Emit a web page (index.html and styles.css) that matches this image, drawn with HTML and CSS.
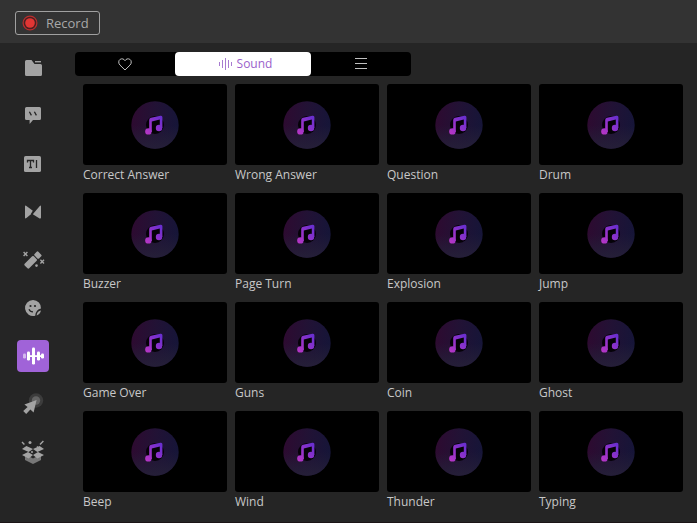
FILE: index.html
```html
<!DOCTYPE html>
<html lang="en">

<head>
    <meta charset="UTF-8">
    <meta name="viewport" content="width=device-width, initial-scale=1.0">
    <title>Sound library</title>
    <link rel="stylesheet" href="styles.css">
</head>

<body>
    <!-- Shared artwork for the sound cards -->
    <svg class="defs" width="0" height="0" aria-hidden="true">
        <defs>
            <linearGradient id="disc-fill" x1="0" y1="0.2" x2="1" y2="0.3">
                <stop offset="0" stop-color="#2e0a30" />
                <stop offset="0.5" stop-color="#221235" />
                <stop offset="1" stop-color="#161538" />
            </linearGradient>
            <linearGradient id="disc-shade" x1="0" y1="0" x2="0" y2="1">
                <stop offset="0.5" stop-color="#251f38" stop-opacity="0" />
                <stop offset="1" stop-color="#251f38" />
            </linearGradient>
            <linearGradient id="note-fill" gradientUnits="userSpaceOnUse" x1="14" y1="32" x2="31" y2="18">
                <stop offset="0" stop-color="#b836c4" />
                <stop offset="1" stop-color="#6a2fd0" />
            </linearGradient>
        </defs>
        <symbol id="disc" viewBox="0 0 48 48">
            <circle cx="24" cy="24" r="23.7" fill="url(#disc-fill)" />
            <circle cx="24" cy="24" r="23.7" fill="url(#disc-shade)" />
            <circle cx="24" cy="24" r="9" fill="#050208" />
            <g fill="url(#note-fill)">
                <circle cx="17.4" cy="30.4" r="3.2" />
                <circle cx="28" cy="27" r="3.2" />
                <path d="M18.2 31V19Q18.2 17.2 20 16.8L29.4 14.8Q31.4 14.4 31.4 16.3V27H28.8V18.4L20.8 20.4V31Z" />
            </g>
        </symbol>
    </svg>

    <!-- Top bar -->
    <header class="topbar">
        <button class="record" type="button">
            <svg width="16" height="16" viewBox="0 0 16 16" aria-hidden="true">
                <circle cx="8" cy="8" r="6.9" fill="#4a2021" stroke="#b92f2f" stroke-width="1.2" />
                <circle cx="8" cy="8" r="4.8" fill="#e23634" />
            </svg>
            <span>Record</span>
        </button>
    </header>

    <div class="workspace">
        <!-- Tool categories -->
        <nav class="sidebar" aria-label="Tools">
            <button class="tool" type="button" aria-label="Media">
                <svg width="24" height="24" viewBox="0 0 24 24">
                    <path d="M4 5.5Q4 4 5.5 4H10.5L13.5 8H19.5Q21 8 21 9.5V18.5Q21 20 19.5 20H5.5Q4 20 4 18.5Z" />
                    <rect x="14" y="5" width="6" height="1.4" />
                </svg>
            </button>
            <button class="tool" type="button" aria-label="Annotations">
                <svg width="24" height="24" viewBox="0 0 24 24">
                    <path d="M5.5 3H18.5Q20 3 20 4.5V14.5Q20 16 18.5 16H12L8.6 20V16H5.5Q4 16 4 14.5V4.5Q4 3 5.5 3Z" />
                    <path class="cut-line" d="M8.4 7.8L10.4 11.4M13.4 7.8L15.4 11.4" />
                </svg>
            </button>
            <button class="tool" type="button" aria-label="Text">
                <svg width="24" height="24" viewBox="0 0 24 24">
                    <rect x="3" y="4" width="17" height="16" rx="1.6" />
                    <path class="cut-line" d="M6.5 10.5V8.5H12.5V10.5M9.5 8.5V15.5M8 15.5H11M15.5 8V16" />
                </svg>
            </button>
            <button class="tool" type="button" aria-label="Transitions">
                <svg width="24" height="24" viewBox="0 0 24 24">
                    <path d="M4 6.5Q4 5 5.4 5.9L12.2 11L10.6 13.8L5.4 18.1Q4 19 4 17.5Z" />
                    <path d="M20 6.5Q20 5 18.8 5.9L11.8 14.2L18.6 18.4Q20 19 20 17.5Z" />
                    <path class="cut-line" d="M13.4 9.4L10.4 14.4" />
                </svg>
            </button>
            <button class="tool" type="button" aria-label="Effects">
                <svg width="24" height="24" viewBox="0 0 24 24">
                    <g transform="rotate(45 12 12)">
                        <rect x="8.8" y="8.8" width="6.4" height="13" rx="1.2" />
                        <rect x="8.8" y="2.4" width="6.4" height="5.4" rx="1.2" />
                    </g>
                    <path class="line" d="M2.6 4L6.4 8M6.4 4L2.6 8M19.4 11.8L23 15.4M23 11.8L19.4 15.4" />
                    <circle cx="15.5" cy="17.6" r="1.3" />
                </svg>
            </button>
            <button class="tool" type="button" aria-label="Stickers">
                <svg width="24" height="24" viewBox="0 0 24 24">
                    <path d="M12 4A8 8 0 0 1 20 12.6Q15 13.4 14.2 19.7A8 8 0 1 1 12 4Z" />
                    <path d="M20 14.4Q19 18.4 15.6 19.4Q16 15 20 14.4Z" />
                    <circle class="cut" cx="9.5" cy="10" r="1.1" />
                    <circle class="cut" cx="14" cy="10" r="1.1" />
                    <path class="cut-line" d="M8 13.2Q9 15.8 12 15.8" />
                </svg>
            </button>
            <button class="tool active" type="button" aria-label="Audio" aria-current="page">
                <svg width="24" height="24" viewBox="0 0 24 24">
                    <rect x="2" y="9.5" width="3" height="5" rx="1.2" opacity="0.55" />
                    <rect x="6" y="7.5" width="3" height="9" rx="1.2" />
                    <rect x="11" y="3.5" width="3" height="17" rx="1.2" />
                    <rect x="16" y="7.5" width="3" height="9" rx="1.2" />
                    <rect x="20" y="9.5" width="3" height="5" rx="1.2" />
                    <rect x="7" y="11.2" width="14" height="1.8" />
                </svg>
            </button>
            <button class="tool" type="button" aria-label="Cursor">
                <svg width="24" height="24" viewBox="0 0 24 24">
                    <circle cx="15" cy="8.5" r="7.2" fill="#3c3c3c" />
                    <circle cx="15" cy="8.5" r="4.2" fill="#646464" />
                    <path d="M15.6 8L3.4 12.4L6.6 15L2.2 19L5.2 22L9.4 17.6L12.6 20.6Z" />
                </svg>
            </button>
            <button class="tool" type="button" aria-label="Assets">
                <svg width="26" height="26" viewBox="0 0 26 26">
                    <path fill="#777" d="M5 15L13 19.4L21 15V21L13 25L5 21Z" />
                    <path d="M2 10L6.4 7L13 10L8.6 13ZM24 10L19.6 7L13 10L17.4 13Z" />
                    <path d="M2 16L8 13L13 16L8.6 19.6ZM24 16L18 13L13 16L17.4 19.6Z" />
                    <path class="line" d="M2 3L4.4 5.4M20 5.6L23.4 2M17 8.4L18 7.6" />
                    <circle cx="10" cy="3.6" r="1.5" />
                    <circle cx="12" cy="13" r="1" />
                </svg>
            </button>
        </nav>

        <main class="library">
            <!-- Library tabs -->
            <div class="tabs">
                <button class="tab" type="button" aria-label="Favorites">
                    <svg width="14" height="14" viewBox="0 0 14 14">
                        <path d="M7 13L1.9 8C0.2 6.2 0.4 3.4 2.2 2.3C3.9 1.3 6 1.9 7 3.7C8 1.9 10.1 1.3 11.8 2.3C13.6 3.4 13.8 6.2 12.1 8Z" />
                    </svg>
                </button>
                <button class="tab selected" type="button">
                    <svg width="14" height="14" viewBox="0 0 14 14" aria-hidden="true">
                        <path d="M1.5 5V9M4.5 3V11M7.5 1V13M10.5 3V11M13.5 5V9" />
                    </svg>
                    <span>Sound</span>
                </button>
                <button class="tab" type="button" aria-label="List">
                    <svg width="14" height="14" viewBox="0 0 14 14">
                        <path d="M1 1.5H13M1 6.5H13M1 11.5H13" />
                    </svg>
                </button>
            </div>

            <!-- Sound effects -->
            <ul class="sounds">
                <li class="sound">
                    <div class="thumb"><svg class="disc"><use href="#disc" /></svg></div>
                    <span class="name">Correct Answer</span>
                </li>
                <li class="sound">
                    <div class="thumb"><svg class="disc"><use href="#disc" /></svg></div>
                    <span class="name">Wrong Answer</span>
                </li>
                <li class="sound">
                    <div class="thumb"><svg class="disc"><use href="#disc" /></svg></div>
                    <span class="name">Question</span>
                </li>
                <li class="sound">
                    <div class="thumb"><svg class="disc"><use href="#disc" /></svg></div>
                    <span class="name">Drum</span>
                </li>
                <li class="sound">
                    <div class="thumb"><svg class="disc"><use href="#disc" /></svg></div>
                    <span class="name">Buzzer</span>
                </li>
                <li class="sound">
                    <div class="thumb"><svg class="disc"><use href="#disc" /></svg></div>
                    <span class="name">Page Turn</span>
                </li>
                <li class="sound">
                    <div class="thumb"><svg class="disc"><use href="#disc" /></svg></div>
                    <span class="name">Explosion</span>
                </li>
                <li class="sound">
                    <div class="thumb"><svg class="disc"><use href="#disc" /></svg></div>
                    <span class="name">Jump</span>
                </li>
                <li class="sound">
                    <div class="thumb"><svg class="disc"><use href="#disc" /></svg></div>
                    <span class="name">Game Over</span>
                </li>
                <li class="sound">
                    <div class="thumb"><svg class="disc"><use href="#disc" /></svg></div>
                    <span class="name">Guns</span>
                </li>
                <li class="sound">
                    <div class="thumb"><svg class="disc"><use href="#disc" /></svg></div>
                    <span class="name">Coin</span>
                </li>
                <li class="sound">
                    <div class="thumb"><svg class="disc"><use href="#disc" /></svg></div>
                    <span class="name">Ghost</span>
                </li>
                <li class="sound">
                    <div class="thumb"><svg class="disc"><use href="#disc" /></svg></div>
                    <span class="name">Beep</span>
                </li>
                <li class="sound">
                    <div class="thumb"><svg class="disc"><use href="#disc" /></svg></div>
                    <span class="name">Wind</span>
                </li>
                <li class="sound">
                    <div class="thumb"><svg class="disc"><use href="#disc" /></svg></div>
                    <span class="name">Thunder</span>
                </li>
                <li class="sound">
                    <div class="thumb"><svg class="disc"><use href="#disc" /></svg></div>
                    <span class="name">Typing</span>
                </li>
            </ul>
        </main>
    </div>
</body>

</html>
```

FILE: styles.css
```css
/* Set the style of the entire page */
* {
    box-sizing: border-box;
}

body {
    margin: 0;
    min-height: 100vh;
    background-color: #252525;
    border-bottom: 1px solid #1b1416;
    color: #c8c8c8;
    font-family: "Open Sans", "Noto Sans", sans-serif;
    font-size: 12px;
    line-height: 16px;
}

button {
    padding: 0;
    border: 0;
    background: none;
    color: inherit;
    font: inherit;
    cursor: pointer;
}

.defs {
    position: absolute;
}

/* Top bar */
.topbar {
    display: flex;
    align-items: flex-start;
    height: 43px;
    padding: 11px 15px 0;
    background-color: #333333;
}

.record {
    display: flex;
    align-items: center;
    gap: 8px;
    height: 24px;
    padding: 0 10px 0 6px;
    border: 1px solid #a0a0a0;
    border-radius: 3px;
    color: #a8a8a8;
    font-size: 13px;
}

/* Sidebar on the left, library on the right */
.workspace {
    display: flex;
}

.sidebar {
    display: flex;
    flex-direction: column;
    gap: 16px;
    padding: 9px 26px 0 17px;
}

.tool {
    display: flex;
    align-items: center;
    justify-content: center;
    width: 32px;
    height: 32px;
    border-radius: 4px;
    fill: #a3a3a3;
}

.tool.active {
    background-color: #a063d8;
    fill: #ffffff;
}

.line {
    fill: none;
    stroke: #a3a3a3;
    stroke-width: 1.4;
}

/* Details cut out of an icon */
.cut {
    fill: #252525;
}

.cut-line {
    fill: none;
    stroke: #252525;
    stroke-width: 1.3;
}

.library {
    flex: 1;
    padding: 9px 14px 0 0;
}

/* Tabs */
.tabs {
    display: inline-flex;
    vertical-align: top;
    border-radius: 4px;
    background-color: #000000;
}

.tab {
    display: flex;
    align-items: center;
    justify-content: center;
    gap: 5px;
    width: 100px;
    height: 24px;
    border-radius: 4px;
    fill: none;
    stroke: #c0c0c0;
}

.tab.selected {
    width: 136px;
    padding-left: 4px;
    background-color: #ffffff;
    color: #9a5fcb;
    stroke: #a77bd0;
}

/* Grid of sounds */
.sounds {
    display: grid;
    grid-template-columns: repeat(4, 1fr);
    gap: 8px;
    margin: 8px 0 0;
    padding: 0 0 0 8px;
    list-style: none;
}

.thumb {
    display: flex;
    align-items: center;
    justify-content: center;
    height: 81px;
    border-radius: 3px;
    background-color: #000000;
}

.disc {
    width: 48px;
    height: 48px;
}

.name {
    display: block;
    padding: 2px 0;
}
```
